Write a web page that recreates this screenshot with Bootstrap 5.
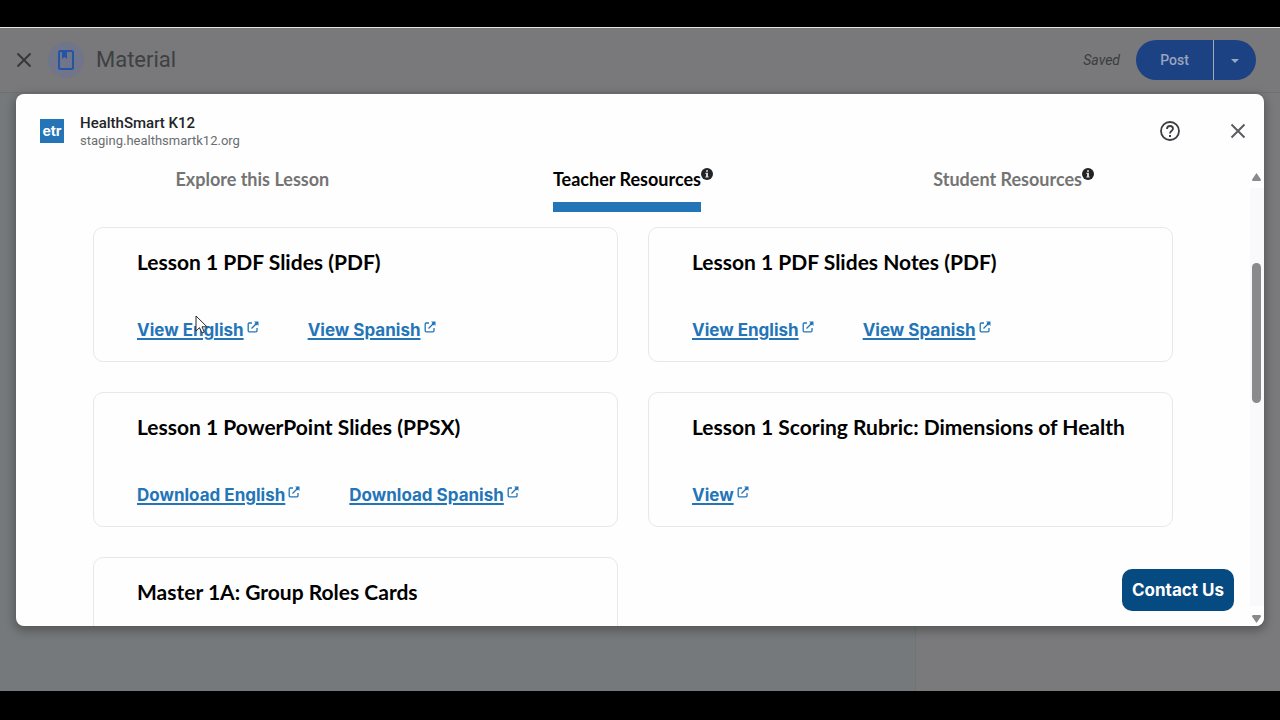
<!DOCTYPE html>
<html lang="en">
<head>
<meta charset="utf-8">
<meta name="viewport" content="width=device-width, initial-scale=1">
<title>Material</title>
<link href="https://cdn.jsdelivr.net/npm/bootstrap@5.3.0/dist/css/bootstrap.min.css" rel="stylesheet">
<style>
  body { background: #000; font-family: Roboto, "Liberation Sans", sans-serif; height: 100vh; padding: 27px 0 29px; }
  .classroom { background: #76797b; border-top: 1px solid #e4e4e4; }
  .topbar { height: 65px; background: #79797b; border-bottom: 1px solid #6e7072; padding: 0 24px 0 16px; }
  .topbar h1 { font-size: 22px; line-height: 28px; color: #3e4043; }
  .book-mark { width: 36px; height: 36px; background: #70758a; }
  .saved { font-size: 14px; color: #3a3c3f; }
  .post-group .btn { --bs-btn-color: #98a5bc; --bs-btn-bg: #1c4284; --bs-btn-hover-color: #a9b6cc; --bs-btn-hover-bg: #1f4a92;
    height: 40px; border: 0; font-size: 14px; font-weight: 500; }
  .post-group .post-main { width: 77px; border-radius: 20px 0 0 20px; }
  .post-group .post-more { width: 43px; border-radius: 0 20px 20px 0; border-left: 1px solid #a3abb8; }
  .side-pane { width: 365px; background: #7a797b; border-left: 1px solid #727375; }

  .addon { inset: 66px 16px 65px; background: #fefefe; border-radius: 8px; box-shadow: 0 3px 10px 2px rgba(0,0,0,.28); }
  .addon-head { height: 74px; padding: 0 16px 0 24px; }
  .etr { width: 24px; height: 24px; background: #2375b8; color: #fff; font: 700 14px/24px Inter, sans-serif; }
  .addon-name { font-size: 15px; line-height: 18px; padding-top: 1px; font-weight: 500; color: #222427; }
  .addon-host { font-size: 13px; line-height: 17px; color: #6a6d70; }
  .icon-btn { --bs-btn-padding-x: 0; --bs-btn-padding-y: 0; width: 20px; height: 20px; border: 0; line-height: 0; }
  .icon-btn-sm { width: 16px; }

  .pane { font-family: Lato, sans-serif; }
  .lesson-tabs { padding: 0 46px; margin-bottom: 15px; }
  .lesson-tabs a { font-size: 18px; line-height: 22px; font-weight: 700; color: #747474; text-decoration: none; padding-bottom: 12px; border-bottom: 10px solid transparent; }
  .lesson-tabs a.active { color: #000; border-color: #2375b8; }
  .resources { display: grid; grid-template-columns: 1fr 1fr; gap: 30px; padding: 0 77px; }
  .resource { height: 135px; border: 1px solid #e8e8ec; border-radius: 10px; padding: 21px 20px 0 43px; }
  .resource h2 { font-size: 21px; line-height: 26px; font-weight: 700; color: #000; margin: 0 0 43px; }
  .resource-links { gap: 49px; font: 700 17px/24px Inter, sans-serif; }
  .resource-links a { color: #2375b8; text-underline-offset: 2px; text-decoration-thickness: 2px; }
  .link-item svg { margin: 3px 0 0 3px; }

  .track { width: 14px; padding: 5px 3px 3px 2px; background: linear-gradient(#fefefe 20px, #f9f9fc 20px calc(100% - 20px), #fefefe 0); border-radius: 0 0 8px 0; }
  .thumb { width: 9px; height: 140px; margin-top: 82px; border-radius: 5px; background: #8a8a8c; }
  .contact { right: 30px; bottom: 15px; height: 42px; padding: 0 10px; border: 0; border-radius: 10px; color: #fff; background: #054a80; font: 700 17px/42px Inter, sans-serif; }
  .pointer { left: 179px; top: 221px; }
</style>
</head>
<body class="d-flex flex-column overflow-hidden">
<svg class="d-none" aria-hidden="true">
  <symbol id="external" viewBox="0 0 12 12"><path d="M5 2H2.2Q1.2 2 1.2 3v6.8q0 1 1 1H9q1 0 1-1V7M4.500 7.500 10.500 1.500" fill="none" stroke="#2375b8" stroke-width="1.300"/><path d="M7 .5h4.500V5L10.200 3.600 9.300 4.500 7.600 2.700 8.500 1.800z" fill="#2375b8"/></symbol>
  <symbol id="info" viewBox="0 0 12 12"><circle cx="6" cy="6" r="6" fill="#212427"/><path d="M5 2.200h2v1.600H5zM4.400 4.800H7v3.600h.7v1.200H4.300V8.400H5V6h-.6z" fill="#d5d5d5"/></symbol>
</svg>

<div class="classroom position-relative flex-fill d-flex flex-column">
  <header class="topbar d-flex align-items-center flex-shrink-0">
    <button class="btn icon-btn icon-btn-sm" type="button" aria-label="Close material"><svg width="16" height="16" viewBox="0 0 16 16"><path d="M1.500 1.500 14.500 14.500M14.500 1.500 1.500 14.500" stroke="#343639" stroke-width="1.800"/></svg></button>
    <span class="book-mark rounded-circle d-flex align-items-center justify-content-center ms-3"><svg width="18" height="22" viewBox="0 0 18 22"><rect x="2" y="2" width="14" height="18" rx="1.500" fill="none" stroke="#2455a4" stroke-width="2"/><path d="M5 2h5v8L7.500 8 5 10z" fill="#2455a4"/></svg></span>
    <h1 class="fw-normal mb-0 ms-2 ps-1">Material</h1>
    <em class="saved ms-auto">Saved</em>
    <div class="post-group d-flex ms-3">
      <button class="btn post-main" type="button">Post</button>
      <button class="btn post-more p-0" type="button" aria-label="More posting options"><svg width="10" height="6" viewBox="0 0 10 6"><path d="M1 1h8L5 5z" fill="#9aa8c0"/></svg></button>
    </div>
  </header>
  <div class="d-flex flex-fill">
    <div class="flex-fill"></div>
    <aside class="side-pane"></aside>
  </div>

  <section class="addon position-absolute d-flex flex-column overflow-hidden" role="dialog" aria-label="HealthSmart K12">
    <header class="addon-head d-flex align-items-center flex-shrink-0">
      <span class="etr text-center">etr</span>
      <div class="ms-3">
        <div class="addon-name">HealthSmart K12</div>
        <div class="addon-host">staging.healthsmartk12.org</div>
      </div>
      <button class="btn icon-btn ms-auto" type="button" aria-label="Help"><svg width="20" height="20" viewBox="0 0 20 20"><circle cx="10" cy="10" r="9" fill="none" stroke="#3c3e41" stroke-width="1.800"/><path d="M7 8q0-3 3-3t3 2.800C13 9.700 10 10 10 12.500" fill="none" stroke="#3c3e41" stroke-width="1.800"/><path d="M9 14h2v2H9z" fill="#3c3e41"/></svg></button>
      <button class="btn icon-btn ms-5" type="button" aria-label="Close"><svg width="20" height="20" viewBox="0 0 20 20"><path d="M3.500 3.500 16.500 16.500M16.500 3.500 3.500 16.500" stroke="#5b5d61" stroke-width="2"/></svg></button>
    </header>

    <div class="d-flex flex-fill overflow-hidden">
      <main class="pane flex-fill overflow-hidden">
        <nav class="lesson-tabs row g-0">
          <div class="col-4 d-flex justify-content-center"><a href="#">Explore this Lesson</a></div>
          <div class="col-4 d-flex justify-content-center"><a href="#" class="active" aria-current="page">Teacher Resources</a><svg width="12" height="12"><use href="#info"/></svg></div>
          <div class="col-4 d-flex justify-content-center"><a href="#">Student Resources</a><svg width="12" height="12"><use href="#info"/></svg></div>
        </nav>
        <div class="resources">
          <article class="resource">
            <h2>Lesson 1 PDF Slides (PDF)</h2>
            <div class="resource-links d-flex">
              <span class="link-item d-flex"><a href="#">View English</a><svg width="12" height="12"><use href="#external"/></svg></span>
              <span class="link-item d-flex"><a href="#">View Spanish</a><svg width="12" height="12"><use href="#external"/></svg></span>
            </div>
          </article>
          <article class="resource">
            <h2>Lesson 1 PDF Slides Notes (PDF)</h2>
            <div class="resource-links d-flex">
              <span class="link-item d-flex"><a href="#">View English</a><svg width="12" height="12"><use href="#external"/></svg></span>
              <span class="link-item d-flex"><a href="#">View Spanish</a><svg width="12" height="12"><use href="#external"/></svg></span>
            </div>
          </article>
          <article class="resource">
            <h2>Lesson 1 PowerPoint Slides (PPSX)</h2>
            <div class="resource-links d-flex">
              <span class="link-item d-flex"><a href="#">Download English</a><svg width="12" height="12"><use href="#external"/></svg></span>
              <span class="link-item d-flex"><a href="#">Download Spanish</a><svg width="12" height="12"><use href="#external"/></svg></span>
            </div>
          </article>
          <article class="resource">
            <h2>Lesson 1 Scoring Rubric: Dimensions of Health</h2>
            <div class="resource-links d-flex">
              <span class="link-item d-flex"><a href="#">View</a><svg width="12" height="12"><use href="#external"/></svg></span>
            </div>
          </article>
          <article class="resource">
            <h2>Master 1A: Group Roles Cards</h2>
          </article>
        </div>
      </main>
      <div class="track d-flex flex-column flex-shrink-0" aria-hidden="true">
        <svg width="9" height="8" viewBox="0 0 9 8"><path d="M4.500 0 9 6.500Q9 8 8 8H1Q0 8 0 6.500z" fill="#8a8a8c"/></svg>
        <div class="thumb"></div>
        <svg class="mt-auto" width="9" height="8" viewBox="0 0 9 8"><path d="M4.500 8 9 1.500Q9 0 8 0H1Q0 0 0 1.500z" fill="#8a8a8c"/></svg>
      </div>
    </div>
    <button class="contact position-absolute" type="button">Contact Us</button>
    <svg class="pointer position-absolute" width="13" height="20" viewBox="0 0 13 20" aria-hidden="true"><path d="M1 1v15l3.500-3.300L7 18l2.300-1L7 11.800h5z" fill="#fff" stroke="#26282c" stroke-width="1"/></svg>
  </section>
</div>
<script src="https://cdn.jsdelivr.net/npm/bootstrap@5.3.0/dist/js/bootstrap.bundle.min.js"></script>
</body>
</html>
